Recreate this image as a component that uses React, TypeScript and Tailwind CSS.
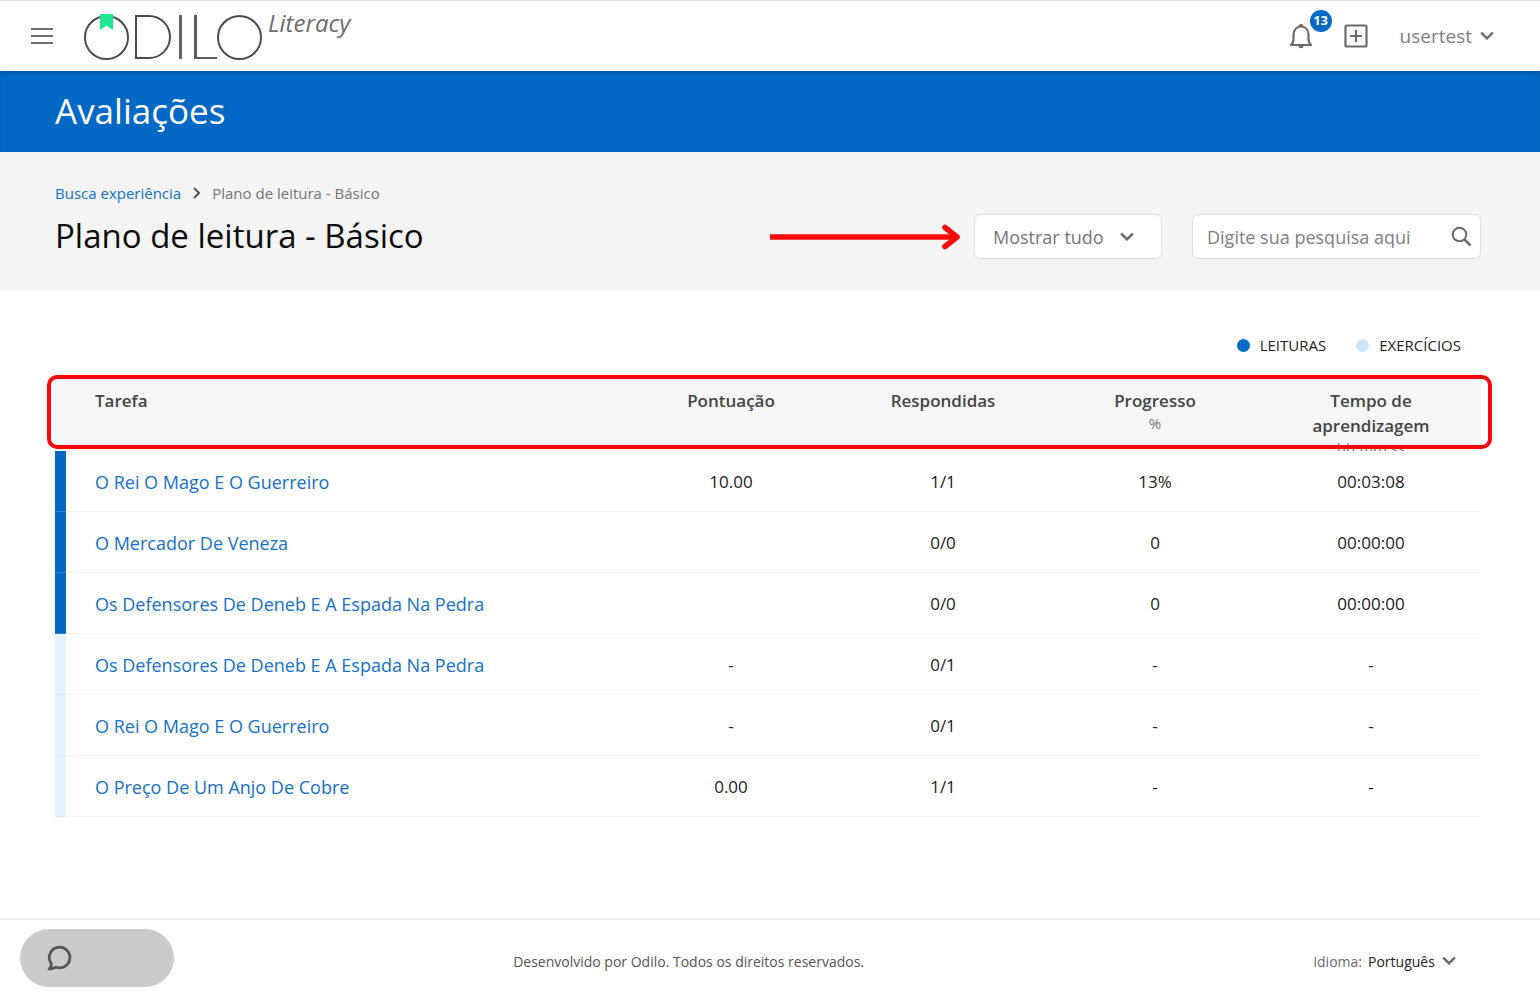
import React from "react";

type Row = {
  kind: "reading" | "exercise";
  title: string;
  score: string;
  answered: string;
  progress: string;
  time: string;
};

const rows: Row[] = [
  { kind: "reading", title: "O Rei O Mago E O Guerreiro", score: "10.00", answered: "1/1", progress: "13%", time: "00:03:08" },
  { kind: "reading", title: "O Mercador De Veneza", score: "", answered: "0/0", progress: "0", time: "00:00:00" },
  { kind: "reading", title: "Os Defensores De Deneb E A Espada Na Pedra", score: "", answered: "0/0", progress: "0", time: "00:00:00" },
  { kind: "exercise", title: "Os Defensores De Deneb E A Espada Na Pedra", score: "-", answered: "0/1", progress: "-", time: "-" },
  { kind: "exercise", title: "O Rei O Mago E O Guerreiro", score: "-", answered: "0/1", progress: "-", time: "-" },
  { kind: "exercise", title: "O Preço De Um Anjo De Cobre", score: "0.00", answered: "1/1", progress: "-", time: "-" },
];

function Chevron({ className }: { className?: string }) {
  return (
    <svg className={className} width="14" height="10" viewBox="0 0 14 10" fill="none" stroke="currentColor" strokeWidth="2.4" aria-hidden="true">
      <path d="M1.2 1.6 7 7.4l5.8-5.8" />
    </svg>
  );
}

function Logo() {
  return (
    <a href="#inicio" aria-label="Odilo Literacy" className="flex items-start pt-[3px]">
      <span className="relative h-[45px] w-[45px] rounded-full border-2 border-[#4c4c4c]">
        <svg className="absolute -top-[3px] left-[14px]" width="13" height="16" viewBox="0 0 13 16" aria-hidden="true">
          <path d="M0 0h13v16l-6.500-4.500L0 16z" fill="#1de592" />
        </svg>
      </span>
      <span className="ml-1.5 h-11 w-9 rounded-r-[22px] border-2 border-[#4c4c4c]" />
      <span className="ml-2 h-11 w-[3px] bg-[#666]" />
      <span className="ml-3 h-11 w-[23px] border-b-2 border-l-[3px] border-[#5c5c5c]" />
      <span className="h-[45px] w-[45px] rounded-full border-2 border-[#4c4c4c]" />
      <span className="-mt-1.5 ml-1.5 text-2xl leading-7 text-[#6c6c6c] italic">Literacy</span>
    </a>
  );
}

function Header() {
  return (
    <header className="flex h-[71px] items-center border-t border-[#e2e2e6] bg-white pr-[46px] pl-[31px] text-[#6b6b6b]">
      <button type="button" aria-label="Menu" className="mr-[31px] flex w-[22px] flex-col gap-[5px]">
        <span className="h-0.5 w-full bg-[#707070]" />
        <span className="h-0.5 w-full bg-[#707070]" />
        <span className="h-0.5 w-full bg-[#707070]" />
      </button>
      <Logo />
      <div className="ml-auto flex items-center">
        <button type="button" aria-label="Notificações" className="relative mr-[31px]">
          <svg width="24" height="26" viewBox="0 0 24 26" fill="none" stroke="currentColor" strokeWidth="2.2" aria-hidden="true">
            <path d="M2 22c2-1.500 2.500-3.500 2.500-6.500v-3.500C4.500 7 7.500 3.500 12 3.500s7.500 3.500 7.500 8.500v3.500c0 3 .5 5 2.500 6.500z" strokeLinejoin="round" />
            <path d="M9.500 3.800a2.500 2.800 0 0 1 5 0zM9.500 22.800a2.500 2.500 0 0 0 5 0z" fill="currentColor" stroke="none" />
          </svg>
          <span className="absolute -top-[13px] -right-[19px] flex size-[22px] items-center justify-center rounded-full bg-[#0168c5] text-[13px] font-bold text-white">13</span>
        </button>
        <button type="button" aria-label="Adicionar" className="mr-8">
          <svg width="24" height="24" viewBox="0 0 24 24" fill="none" stroke="currentColor" strokeWidth="2.2" aria-hidden="true">
            <rect x="1.5" y="1.5" width="21" height="21" rx="1.5" />
            <path d="M12 6v12M6 12h12" />
          </svg>
        </button>
        <button type="button" className="flex items-center gap-2 text-[19px] text-[#808080]">
          usertest
          <Chevron className="text-[#6b6b6b]" />
        </button>
      </div>
    </header>
  );
}

function PlanBar() {
  return (
    <section className="flex h-[138px] items-start justify-between border-b border-[#ececec] bg-[#f4f4f4] pt-[30px] pr-[59px] pl-[55px]">
      <div>
        <nav aria-label="Trilha" className="flex h-[22px] items-center gap-3 text-[15px] text-[#757575]">
          <a href="#experiencia" className="text-[#0f72ca]">Busca experiência</a>
          <svg width="7" height="12" viewBox="0 0 7 12" fill="none" stroke="#555" strokeWidth="2" aria-hidden="true">
            <path d="m1 1 5 5-5 5" />
          </svg>
          <span>Plano de leitura - Básico</span>
        </nav>
        <h2 className="mt-2 text-[33px] leading-[48px] text-[#0c0c0c]">Plano de leitura - Básico</h2>
      </div>
      <div className="mt-8 flex items-center">
        <svg className="mr-3.5" width="190" height="26" viewBox="0 0 190 26" fill="none" stroke="#f80808" strokeWidth="5.5" aria-hidden="true">
          <path d="M0 13h186" />
          <path d="m175 3.500 12 9.500-12 9.500" strokeLinecap="round" strokeLinejoin="round" />
        </svg>
        <div className="relative mr-[30px] w-[188px]">
          <select aria-label="Filtro" className="h-[45px] w-full appearance-none rounded-md border border-[#dedede] bg-white pl-[18px] text-lg text-[#757575]">
            <option>Mostrar tudo</option>
          </select>
          <Chevron className="pointer-events-none absolute top-[18px] right-7 text-[#666]" />
        </div>
        <div className="flex h-[45px] w-[289px] items-center rounded-md border border-[#dedede] bg-white pr-2 pl-3.5">
          <input type="text" aria-label="Pesquisa" placeholder="Digite sua pesquisa aqui" className="min-w-0 flex-1 bg-transparent text-lg text-[#757575] outline-none placeholder:text-[#808080]" />
          <button type="button" aria-label="Pesquisar">
            <svg width="21" height="21" viewBox="0 0 21 21" fill="none" stroke="#6e6e6e" strokeWidth="2" aria-hidden="true">
              <circle cx="8.5" cy="8.5" r="6.8" />
              <path d="m13.500 13.500 6 6" strokeWidth="2.6" />
            </svg>
          </button>
        </div>
      </div>
    </section>
  );
}

function HeadCell({ label, note, first }: { label: string; note?: string; first?: boolean }) {
  return (
    <th scope="col" className="p-0 align-top font-semibold">
      <div className={first ? "h-[73px] overflow-hidden pt-2.5 pl-10 text-left" : "h-[73px] overflow-hidden px-8 pt-2.5 text-center"}>
        <div className="leading-[25px]">{label}</div>
        {note && <div className="text-[15px] leading-5 font-normal text-[#757575]">{note}</div>}
      </div>
    </th>
  );
}

function TaskTable() {
  return (
    <div className="relative">
      <table className="w-full table-fixed border-separate border-spacing-0 text-[17px] text-[#222]">
        <colgroup>
          <col />
          <col className="w-[212px]" />
          <col className="w-[212px]" />
          <col className="w-[212px]" />
          <col className="w-[220px]" />
        </colgroup>
        <thead className="bg-[#f6f6f6] text-[#444]">
          <tr>
            <HeadCell label="Tarefa" first />
            <HeadCell label="Pontuação" />
            <HeadCell label="Respondidas" />
            <HeadCell label="Progresso" note="%" />
            <HeadCell label="Tempo de aprendizagem" note="hh:mm:ss" />
          </tr>
        </thead>
        <tbody>
          {rows.map((r, i) => (
            <tr key={i} className="text-center">
              <td className="p-0 text-left">
                <div className="flex h-[61px]">
                  <span className={r.kind === "reading" ? "w-[11px] border-b border-[#2f84d2] bg-[#0168c5]" : "w-[11px] border-b border-[#deedfb] bg-[#e5f2ff]"} />
                  <span className="flex flex-1 items-center border-b border-[#f3f3f3] pt-0.5 pl-[29px]">
                    <a href="#tarefa" className="text-lg text-[#1472c8]">{r.title}</a>
                  </span>
                </div>
              </td>
              <td className="border-b border-[#f3f3f3] px-0 pt-0.5 pb-0">{r.score}</td>
              <td className="border-b border-[#f3f3f3] px-0 pt-0.5 pb-0">{r.answered}</td>
              <td className="border-b border-[#f3f3f3] px-0 pt-0.5 pb-0">{r.progress}</td>
              <td className="border-b border-[#f3f3f3] px-0 pt-0.5 pb-0">{r.time}</td>
            </tr>
          ))}
        </tbody>
      </table>
      <div className="pointer-events-none absolute -top-[3px] -right-[11px] -left-2 h-[74px] rounded-[10px] border-4 border-[#f80808]" />
    </div>
  );
}

function Footer() {
  return (
    <footer className="flex h-[82px] items-center border-t-2 border-[#f0f0f0] pt-1 pr-[84px] pl-16 text-sm text-[#555]">
      <p className="flex-1 text-center">Desenvolvido por Odilo. Todos os direitos reservados.</p>
      <label htmlFor="lang" className="mr-1.5 text-[#6b6b6b]">Idioma:</label>
      <div className="relative w-[88px]">
        <select id="lang" className="w-full appearance-none bg-transparent text-[#222]">
          <option>Português</option>
        </select>
        <Chevron className="pointer-events-none absolute top-1 right-0 text-[#666]" />
      </div>
    </footer>
  );
}

export default function App() {
  return (
    <div className="flex min-h-screen flex-col bg-white font-['Open_Sans',sans-serif]">
      <Header />
      <section className="flex h-[81px] items-center bg-[#0168c5] pb-0.5 pl-[55px] shadow-[inset_0_4px_5px_-2px_rgba(0,0,0,0.15)]">
        <h1 className="text-[35px] leading-[48px] text-white">Avaliações</h1>
      </section>
      <PlanBar />
      <main className="flex-1 pt-[43px] pr-[59px] pl-[55px]">
        <ul className="mb-[21px] flex h-6 items-center justify-end gap-[30px] pr-5 text-[15px] text-[#222]">
          <li className="flex items-center gap-2.5">
            <span className="size-[13px] rounded-full bg-[#0168c5]" />
            LEITURAS
          </li>
          <li className="flex items-center gap-2.5">
            <span className="size-[13px] rounded-full bg-[#cce5ff]" />
            EXERCÍCIOS
          </li>
        </ul>
        <TaskTable />
      </main>
      <Footer />
      <button type="button" aria-label="Chat" className="fixed bottom-[13px] left-5 flex h-[58px] w-[154px] items-center rounded-full bg-[#cbcbcb] pl-[27px]">
        <svg width="26" height="26" viewBox="0 0 26 26" fill="none" stroke="#555" strokeWidth="2.8" strokeLinejoin="round" aria-hidden="true">
          <path d="M2 24c2-1 2.500-2.500 2.200-5.500A10.300 10.300 0 1 1 9 22.200C7 23.500 4.500 24 2 24z" />
        </svg>
      </button>
    </div>
  );
}
